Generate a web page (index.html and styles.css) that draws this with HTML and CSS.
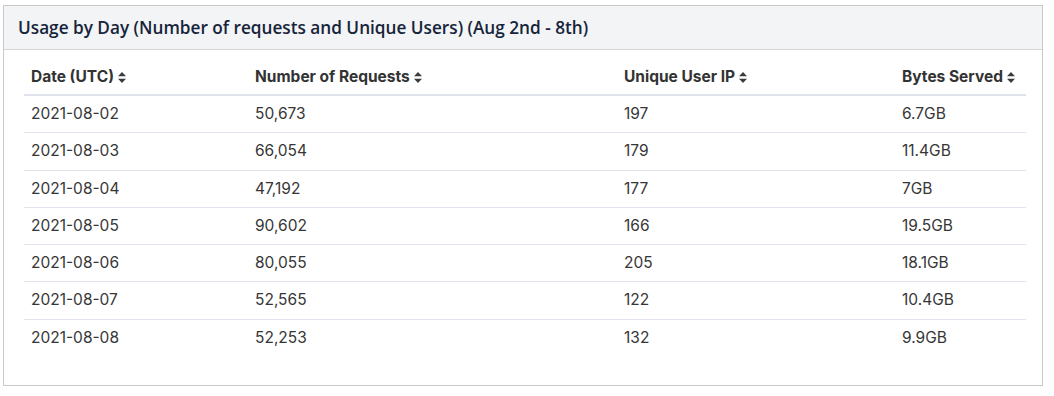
FILE: index.html
```html
<!DOCTYPE html>
<html>
<head>
    <title>Usage by Day</title>
    <link rel="stylesheet" href="styles.css">
</head>
<body>
    <div class="card">
        <div class="card-header">Usage by Day (Number of requests and Unique Users) (Aug 2nd - 8th)</div>
        <div class="card-body">
            <table class="usage-table">
                <colgroup>
                    <col class="col-date">
                    <col class="col-requests">
                    <col class="col-users">
                    <col>
                </colgroup>
                <thead>
                    <tr>
                        <th>Date (UTC)<svg class="sort" viewBox="0 0 8 11"><path d="M4 0 L8 4.2 L0 4.2 Z M4 11 L8 6.8 L0 6.8 Z"/></svg></th>
                        <th>Number of Requests<svg class="sort" viewBox="0 0 8 11"><path d="M4 0 L8 4.2 L0 4.2 Z M4 11 L8 6.8 L0 6.8 Z"/></svg></th>
                        <th>Unique User IP<svg class="sort" viewBox="0 0 8 11"><path d="M4 0 L8 4.2 L0 4.2 Z M4 11 L8 6.8 L0 6.8 Z"/></svg></th>
                        <th>Bytes Served<svg class="sort" viewBox="0 0 8 11"><path d="M4 0 L8 4.2 L0 4.2 Z M4 11 L8 6.8 L0 6.8 Z"/></svg></th>
                    </tr>
                </thead>
                <tbody>
                    <tr><td>2021-08-02</td><td>50,673</td><td>197</td><td>6.7GB</td></tr>
                    <tr><td>2021-08-03</td><td>66,054</td><td>179</td><td>11.4GB</td></tr>
                    <tr><td>2021-08-04</td><td>47,192</td><td>177</td><td>7GB</td></tr>
                    <tr><td>2021-08-05</td><td>90,602</td><td>166</td><td>19.5GB</td></tr>
                    <tr><td>2021-08-06</td><td>80,055</td><td>205</td><td>18.1GB</td></tr>
                    <tr><td>2021-08-07</td><td>52,565</td><td>122</td><td>10.4GB</td></tr>
                    <tr><td>2021-08-08</td><td>52,253</td><td>132</td><td>9.9GB</td></tr>
                </tbody>
            </table>
        </div>
    </div>
</body>
</html>
```

FILE: styles.css
```css
body {
    margin: 0;
    background-color: #fff;
    font-family: Inter, "Noto Sans", sans-serif;
}
.card {
    width: 1040px;
    height: 381px;
    margin: 5px 0 0 3px;
    box-sizing: border-box;
    border: 1px solid #c9c9c9;
    background-color: #fff;
}
.card-header {
    height: 43px;
    padding: 0 14px;
    display: flex;
    align-items: center;
    font-family: "Open Sans", sans-serif;
    font-size: 17.2px;
    font-weight: 600;
    color: #16243a;
    background-color: #f3f4f6;
    border-bottom: 1px solid #d3d5d8;
}
.card-body {
    padding: 7px 15px 0 20px;
}
.usage-table {
    width: 1002px;
    border-collapse: collapse;
    table-layout: fixed;
    font-size: 15.5px;
    color: #363636;
}
.col-date { width: 224px; }
.col-requests { width: 369px; }
.col-users { width: 278px; }
.usage-table th {
    text-align: left;
    font-weight: 700;
    font-size: 15.5px;
    color: #333;
    padding: 9px 7px 7px;
    line-height: 21px;
    border-bottom: 2px solid #dfe3ec;
    white-space: nowrap;
}
.usage-table td {
    padding: 8px 7px;
    line-height: 20.3px;
    border-bottom: 1px solid #dfe3ec;
}
.usage-table tbody tr:last-child td {
    border-bottom: none;
}
.sort {
    width: 8px;
    height: 11px;
    margin-left: 4px;
    fill: #3c3c3c;
    vertical-align: -1px;
}
```
